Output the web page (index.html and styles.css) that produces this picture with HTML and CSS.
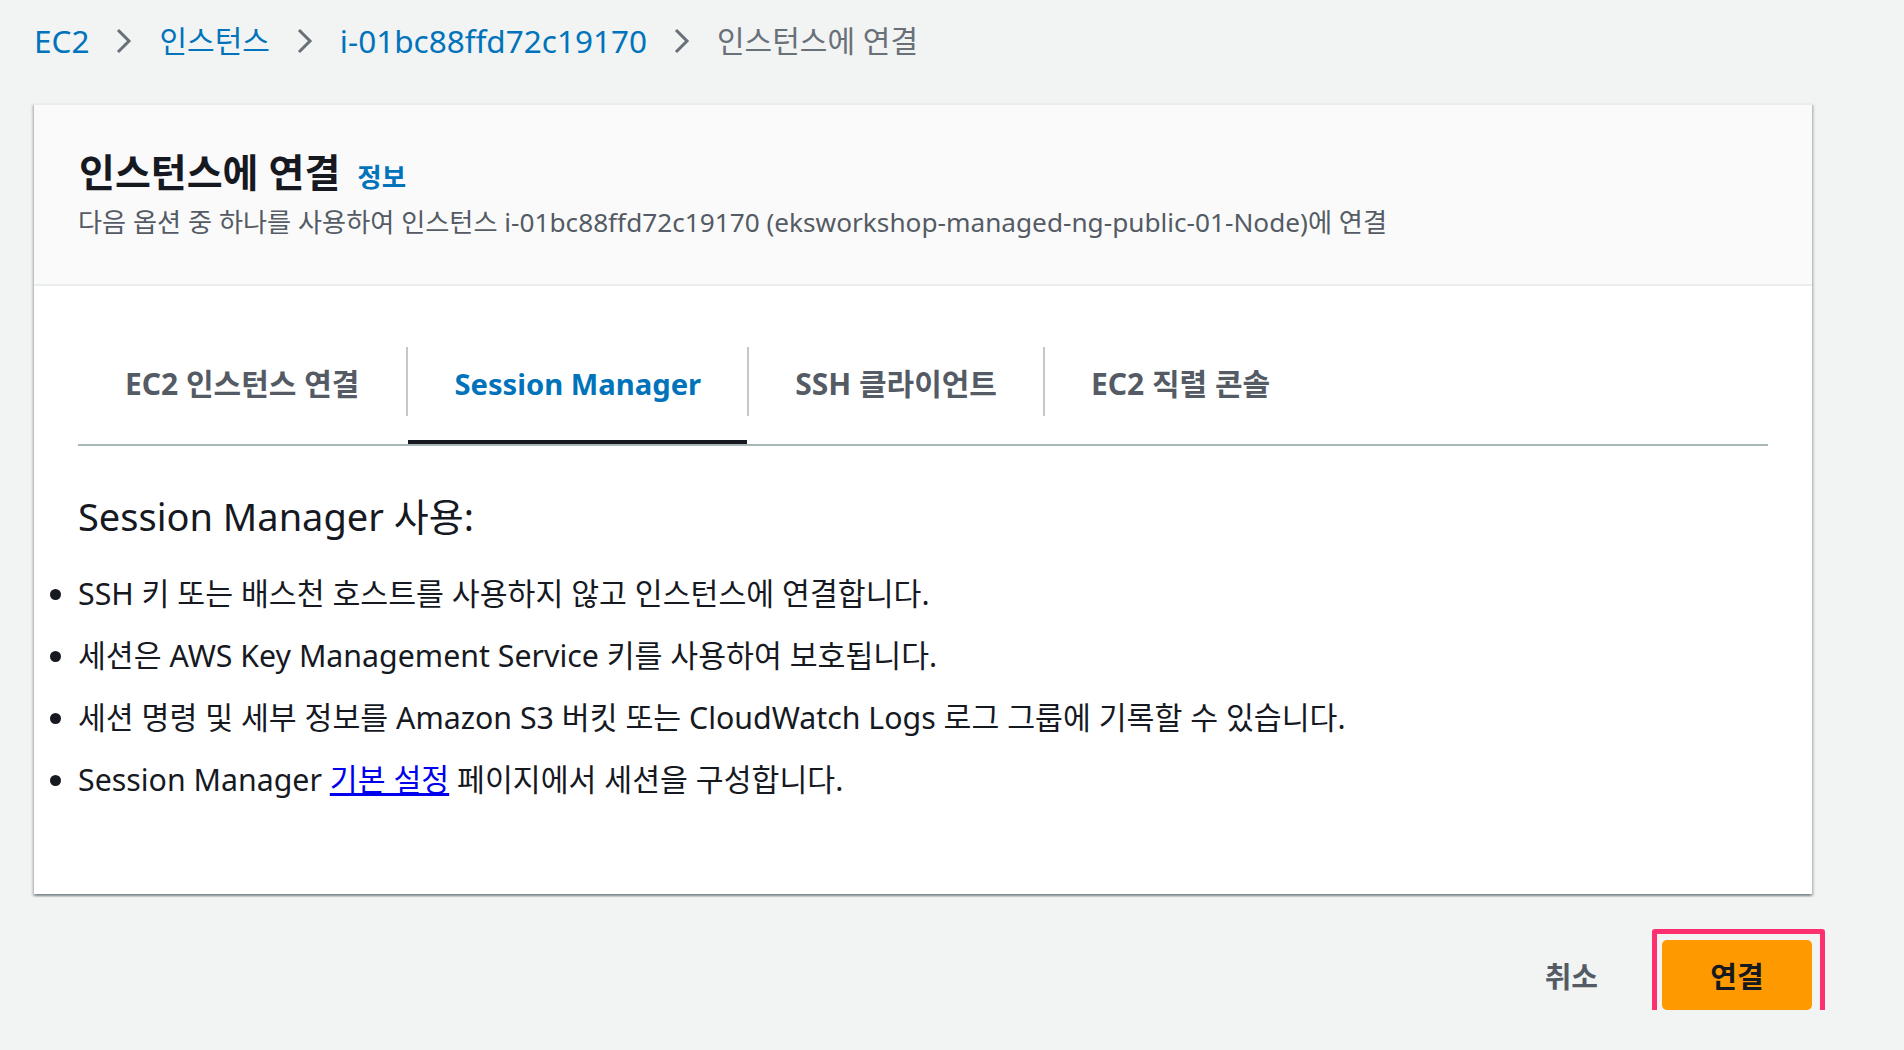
FILE: index.html
```html
<!DOCTYPE html>
<html lang="ko">
<head>
<meta charset="utf-8">
<title>인스턴스에 연결</title>
<link rel="stylesheet" href="styles.css">
</head>
<body>
<div class="page">
  <nav class="breadcrumbs">
    <a class="crumb latin" href="#">EC2</a>
    <svg class="chev" viewBox="0 0 18 26" width="18" height="26"><path d="M3 2 L14 13 L3 24" fill="none" stroke="#687078" stroke-width="3"/></svg>
    <a class="crumb ko" href="#">인스턴스</a>
    <svg class="chev" viewBox="0 0 18 26" width="18" height="26"><path d="M3 2 L14 13 L3 24" fill="none" stroke="#687078" stroke-width="3"/></svg>
    <a class="crumb latin" href="#">i-01bc88ffd72c19170</a>
    <svg class="chev" viewBox="0 0 18 26" width="18" height="26"><path d="M3 2 L14 13 L3 24" fill="none" stroke="#687078" stroke-width="3"/></svg>
    <span class="crumb ko current">인스턴스에 연결</span>
  </nav>

  <section class="card">
    <header class="card-header">
      <h1 class="title"><span>인스턴스에 연결</span><a class="info" href="#">정보</a></h1>
      <p class="subtitle">다음 옵션 중 하나를 사용하여 인스턴스 i-01bc88ffd72c19170 (eksworkshop-managed-ng-public-01-Node)에 연결</p>
    </header>
    <div class="card-body">
      <div class="tabs">
        <div class="tab first">EC2 인스턴스 연결</div>
        <span class="sep"></span>
        <div class="tab active">Session Manager</div>
        <span class="sep"></span>
        <div class="tab">SSH 클라이언트</div>
        <span class="sep"></span>
        <div class="tab">EC2 직렬 콘솔</div>
      </div>
      <h2 class="section-title">Session Manager 사용:</h2>
      <ul class="features">
        <li>SSH 키 또는 배스천 호스트를 사용하지 않고 인스턴스에 연결합니다.</li>
        <li>세션은 AWS Key Management Service 키를 사용하여 보호됩니다.</li>
        <li>세션 명령 및 세부 정보를 Amazon S3 버킷 또는 CloudWatch Logs 로그 그룹에 기록할 수 있습니다.</li>
        <li>Session Manager <a class="plain-link" href="#">기본 설정</a> 페이지에서 세션을 구성합니다.</li>
      </ul>
    </div>
  </section>

  <div class="actions">
    <span class="cancel">취소</span>
    <button class="btn-primary">연결</button>
  </div>
</div>
</body>
</html>
```

FILE: styles.css
```css
html, body {
  margin: 0;
  padding: 0;
  background: #f2f3f3;
}

body {
  font-family: "Noto Sans", "Noto Sans CJK KR", sans-serif;
  color: #16191f;
}

.page {
  padding: 0 92px 0 34px;
}

.breadcrumbs {
  display: flex;
  align-items: center;
  height: 40px;
  padding-top: 21px;
  margin-bottom: 42px;
  line-height: 40px;
}

.crumb {
  color: #0073bb;
  text-decoration: none;
  white-space: nowrap;
}

.crumb.latin {
  font-size: 31.5px;
}

.crumb.ko {
  font-size: 30px;
}

.crumb.current {
  color: #687078;
}

.chev {
  margin: 0 26px;
  flex: none;
}

.card {
  background: #ffffff;
  border-top: 2px solid #eaeded;
  box-shadow: 0 2px 2px rgba(0, 28, 36, 0.3), 2px 2px 2px rgba(0, 28, 36, 0.15), -2px 2px 2px rgba(0, 28, 36, 0.15);
}

.card-header {
  background: #fafafa;
  border-bottom: 2px solid #eaeded;
  padding: 40px 44px 44px 44px;
}

.title {
  margin: 0;
  display: flex;
  align-items: baseline;
  font-size: 39px;
  line-height: 54px;
  font-weight: 700;
  color: #16191f;
}

.title span {
  padding-left: 1px;
}

.info {
  margin-left: 17px;
  font-size: 26.5px;
  font-weight: 700;
  color: #0073bb;
  text-decoration: none;
}

.subtitle {
  margin: 0;
  font-size: 26.2px;
  line-height: 36px;
  color: #545b64;
}

.card-body {
  padding: 63px 44px 93px 44px;
}

.tabs {
  display: flex;
  align-items: flex-start;
  border-bottom: 2px solid #aab7b8;
}

.tab {
  font-size: 30px;
  font-weight: 700;
  color: #545b64;
  line-height: 70px;
  padding: 0 46px 21px 46px;
  border-bottom: 4px solid transparent;
  white-space: nowrap;
}

.tab.first {
  padding-left: 47px;
  padding-right: 47px;
}

.tab.active {
  color: #0073bb;
  border-bottom-color: #16191f;
  font-size: 29.2px;
}

.sep {
  flex: none;
  width: 2px;
  height: 69px;
  background: #c3cacb;
  margin-top: -2px;
}

.section-title {
  margin: 45px 0 0 0;
  font-size: 38px;
  line-height: 50px;
  font-weight: 400;
  color: #16191f;
}

.features {
  margin: 32px 0 0 0;
  padding: 0;
  list-style: disc outside;
}

.features li {
  font-size: 30.3px;
  line-height: 42px;
  margin-bottom: 20px;
  color: #16191f;
}

.features li:last-child {
  margin-bottom: 0;
}

.plain-link {
  color: #0000ee;
  text-decoration: underline;
}

.actions {
  display: flex;
  justify-content: flex-end;
  align-items: center;
  margin-top: 46px;
}

.cancel {
  font-size: 29px;
  font-weight: 700;
  color: #545b64;
  margin-right: 64px;
}

.btn-primary {
  position: relative;
  width: 150px;
  height: 70px;
  border: none;
  border-radius: 5px;
  background: #ff9900;
  color: #16191f;
  font-family: "Noto Sans", "Noto Sans CJK KR", sans-serif;
  font-size: 29px;
  font-weight: 700;
  padding: 0;
}

.btn-primary::after {
  content: "";
  position: absolute;
  left: -10px;
  right: -13px;
  top: -11px;
  bottom: -15px;
  border: 5px solid #fe2f6f;
  border-radius: 3px;
}
```
